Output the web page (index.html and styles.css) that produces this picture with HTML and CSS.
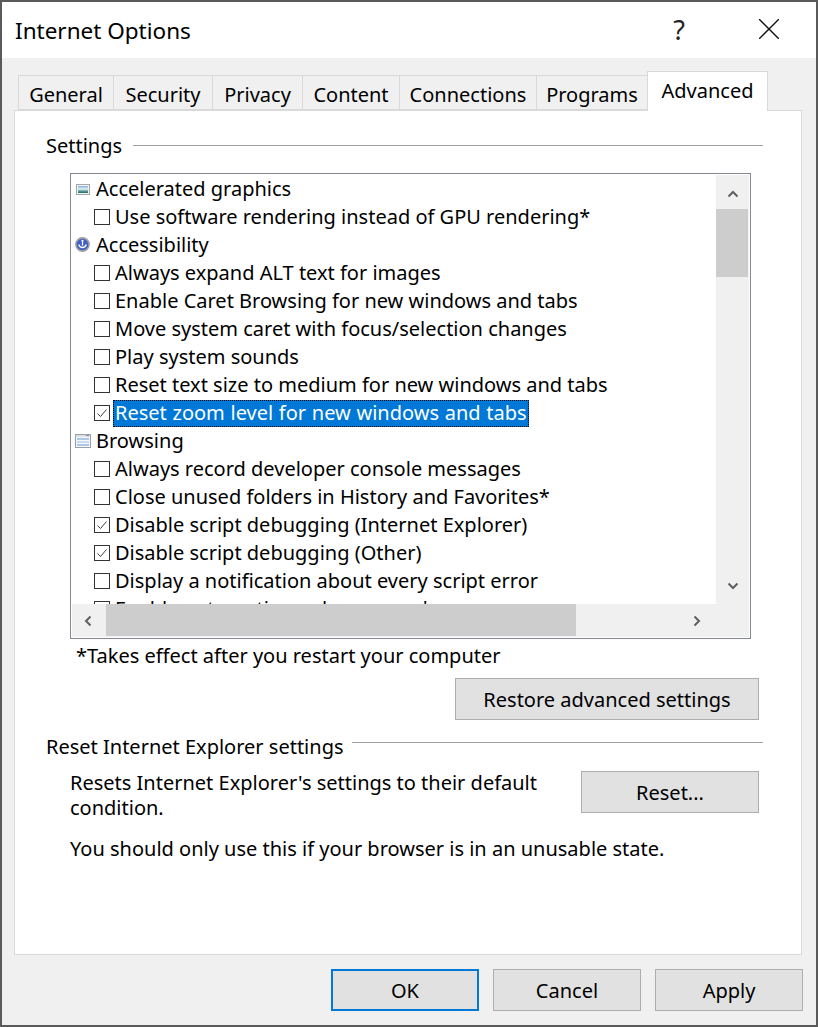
FILE: index.html
```html
<!DOCTYPE html>
<html lang="en">
<head>
<meta charset="utf-8">
<title>Internet Options</title>
<link rel="stylesheet" href="styles.css">
</head>
<body>
<svg class="defs" width="0" height="0" aria-hidden="true">
  <symbol id="check" viewBox="0 0 14 14">
    <path d="M2.500 7.500 5.500 10.500 11.500 3.500" fill="none" stroke="#3c3c3c" stroke-width="1"/>
  </symbol>
</svg>
<div class="window">
  <header class="titlebar">
    <span class="title">Internet Options</span>
    <span class="help">?</span>
    <svg class="close" width="20" height="20" viewBox="0 0 20 20"><path d="M0 0 20 20M20 0 0 20" stroke="#111" stroke-width="1.4"/></svg>
  </header>
  <main class="content">
    <nav class="tabs">
      <span class="tab">General</span>
      <span class="tab">Security</span>
      <span class="tab">Privacy</span>
      <span class="tab">Content</span>
      <span class="tab">Connections</span>
      <span class="tab">Programs</span>
      <span class="tab tab-active">Advanced</span>
    </nav>
    <section class="panel">
      <div class="group-head group-settings"><span>Settings</span><i class="rule"></i></div>
      <div class="listbox">
        <div class="list-view">
          <ul class="rows">
            <li class="row head">
              <svg class="ico" width="16" height="16" viewBox="0 0 16 16">
                <defs><linearGradient id="sky" x1="0" y1="0" x2="0" y2="1"><stop offset="0" stop-color="#7fb4d8"/><stop offset=".45" stop-color="#e4f1f6"/><stop offset=".7" stop-color="#5f9fa0"/><stop offset="1" stop-color="#1f6f68"/></linearGradient></defs>
                <rect x="1.500" y="3.500" width="13" height="10" fill="#f2f2f2" stroke="#a4a8ae"/>
                <rect x="3" y="5" width="10" height="7" fill="url(#sky)"/>
              </svg>
              Accelerated graphics</li>
            <li class="row"><i class="box"></i>Use software rendering instead of GPU rendering*</li>
            <li class="row head">
              <svg class="ico" width="16" height="16" viewBox="0 0 16 16">
                <circle cx="7.500" cy="7.500" r="6.600" fill="#3f5fc8" stroke="#a0a0a0" stroke-width="1.600"/>
                <circle cx="7.500" cy="3.800" r="1.100" fill="#fff"/>
                <path d="M7.500 4.500V8.500M3.800 7.500C4.800 11.500 10.200 11.500 11.200 7.500" fill="none" stroke="#fff" stroke-width="1.300"/>
              </svg>
              Accessibility</li>
            <li class="row"><i class="box"></i>Always expand ALT text for images</li>
            <li class="row"><i class="box"></i>Enable Caret Browsing for new windows and tabs</li>
            <li class="row"><i class="box"></i>Move system caret with focus/selection changes</li>
            <li class="row"><i class="box"></i>Play system sounds</li>
            <li class="row"><i class="box"></i>Reset text size to medium for new windows and tabs</li>
            <li class="row"><i class="box"><svg width="14" height="14"><use href="#check"/></svg></i><span class="selected">Reset zoom level for new windows and tabs</span></li>
            <li class="row head">
              <svg class="ico" width="16" height="16" viewBox="0 0 16 16">
                <rect x=".500" y="1.500" width="15" height="13" fill="#f6f6f6" stroke="#9aa0a8"/>
                <rect x="1" y="2" width="14" height="2" fill="#dcdfe4"/>
                <rect x="11" y="2" width="3" height="1" fill="#8a8f96"/>
                <rect x="2" y="5" width="12" height="2" fill="#a9c8ea"/>
                <rect x="2" y="8" width="12" height="2" fill="#c6dbf1"/>
                <rect x="2" y="11" width="12" height="2" fill="#a9c8ea"/>
              </svg>
              Browsing</li>
            <li class="row"><i class="box"></i>Always record developer console messages</li>
            <li class="row"><i class="box"></i>Close unused folders in History and Favorites*</li>
            <li class="row"><i class="box"><svg width="14" height="14"><use href="#check"/></svg></i>Disable script debugging (Internet Explorer)</li>
            <li class="row"><i class="box"><svg width="14" height="14"><use href="#check"/></svg></i>Disable script debugging (Other)</li>
            <li class="row"><i class="box"></i>Display a notification about every script error</li>
            <li class="row"><i class="box"></i>Enable automatic crash recovery*</li>
          </ul>
        </div>
        <div class="vscroll">
          <svg class="arrow" width="12" height="8" viewBox="0 0 12 8"><path d="M1.500 6.500 6 2l4.500 4.500" fill="none" stroke="#606060" stroke-width="2"/></svg>
          <i class="vthumb"></i>
          <svg class="arrow arrow-end" width="12" height="8" viewBox="0 0 12 8"><path d="M1.500 1.500 6 6l4.500-4.500" fill="none" stroke="#606060" stroke-width="2"/></svg>
        </div>
        <div class="hscroll">
          <svg class="arrow-h" width="8" height="12" viewBox="0 0 8 12"><path d="M6.500 1.500 2 6l4.500 4.500" fill="none" stroke="#606060" stroke-width="2"/></svg>
          <i class="hthumb"></i>
          <svg class="arrow-h arrow-right" width="8" height="12" viewBox="0 0 8 12"><path d="M1.500 1.500 6 6l-4.500 4.500" fill="none" stroke="#606060" stroke-width="2"/></svg>
        </div>
        <div class="corner"></div>
      </div>
      <p class="note">*Takes effect after you restart your computer</p>
      <div class="restore-line"><button class="btn btn-restore">Restore advanced settings</button></div>
      <div class="group-head group-reset"><span>Reset Internet Explorer settings</span><i class="rule"></i></div>
      <div class="reset-area">
        <p class="reset-text">Resets Internet Explorer's settings to their default condition.</p>
        <button class="btn btn-reset">Reset...</button>
      </div>
      <p class="warn">You should only use this if your browser is in an unusable state.</p>
    </section>
    <footer class="actions">
      <button class="btn btn-action btn-default">OK</button>
      <button class="btn btn-action">Cancel</button>
      <button class="btn btn-action">Apply</button>
    </footer>
  </main>
</div>
</body>
</html>
```
FILE: styles.css
```css
* { box-sizing: border-box; }
html, body { margin: 0; padding: 0; }
body {
  width: 818px;
  height: 1027px;
  overflow: hidden;
  font-family: "Noto Sans", "Open Sans", sans-serif;
  font-size: 20px;
  color: #000;
}
.defs { position: absolute; }
.window {
  width: 818px;
  height: 1027px;
  border: 2px solid #5a5a5a;
  display: flex;
  flex-direction: column;
  background: #f0f0f0;
}
.titlebar {
  height: 56px;
  background: #fff;
  display: flex;
  align-items: center;
  padding: 0 37px 0 13px;
  flex: none;
}
.title { font-size: 22.5px; flex: 1; padding-top: 1px; }
.help { font-size: 27px; margin-right: 74px; color: #222; margin-bottom: 2px; }
.close { display: block; margin-bottom: 2px; }
.content { flex: 1; padding: 13px 14px 0 12px; display: flex; flex-direction: column; }
.tabs {
  display: grid;
  grid-template-columns: 95px 99px 90px 97px 137px 111px 121px;
  margin-left: 4px;
  height: 39px;
  align-items: end;
  position: relative;
  z-index: 1;
  flex: none;
}
.tab {
  height: 35px;
  border: 1px solid #d9d9d9;
  border-right: 0;
  display: flex;
  align-items: center;
  justify-content: center;
  background: #f0f0f0;
  line-height: 1;
  padding-top: 4px;
}
.tab-active {
  height: 40px;
  background: #fff;
  border-right: 1px solid #d9d9d9;
  border-bottom: 0;
  padding-top: 0;
  padding-bottom: 1px;
  margin-bottom: -1px;
}
.panel {
  height: 845px;
  background: #fff;
  border: 1px solid #d9d9d9;
  padding: 0 38px 0 31px;
  flex: none;
}
.group-head { display: flex; align-items: center; line-height: 28px; }
.group-head span { flex: none; }
.rule { flex: 1; height: 1px; background: #a0a0a0; }
.group-settings { margin-top: 21px; }
.group-settings .rule { margin: -2px 0 0 11px; }
.listbox {
  margin: 13px 0 0 24px;
  width: 681px;
  height: 466px;
  border: 1px solid #828790;
  display: grid;
  grid-template-columns: 644px 33px;
  grid-template-rows: 429px 33px;
  padding: 1px;
}
.list-view { overflow: hidden; background: #fff; }
.rows { list-style: none; margin: 0; padding: 0; }
.row {
  height: 28px;
  display: flex;
  align-items: center;
  white-space: nowrap;
  padding: 0 0 2px 22px;
  line-height: 27px;
}
.row.head { padding-left: 3px; }
.ico { flex: none; margin: 2px 5px 0 0; display: block; }
.box {
  flex: none;
  width: 16px;
  height: 16px;
  border: 1px solid #333;
  margin: 2px 5px 0 0;
  background: #fff;
  display: block;
}
.box svg { display: block; margin: 0; }
.selected {
  background: #0078d7;
  color: #fff;
  outline: 1px dotted #000;
  outline-offset: -1px;
  height: 27px;
  padding: 0 2px;
  margin-left: -2px;
  align-self: flex-start;
  margin-top: 1px;
  line-height: 26px;
  word-spacing: .5px;
}
.vscroll {
  background: #f0f0f0;
  display: flex;
  flex-direction: column;
  align-items: center;
  padding-top: 15px;
}
.arrow { display: block; flex: none; }
.arrow-end { margin-top: auto; margin-bottom: 14px; }
.vthumb { width: 32px; height: 68px; background: #cdcdcd; margin-top: 11px; display: block; align-self: flex-start; }
.hscroll {
  background: #f0f0f0;
  display: flex;
  align-items: center;
  padding-left: 12px;
}
.hthumb { height: 32px; width: 470px; background: #cdcdcd; margin-left: 14px; display: block; align-self: flex-start; }
.arrow-h { display: block; flex: none; }
.arrow-right { margin-left: auto; margin-right: 15px; }
.corner { background: #f0f0f0; }
.note { margin: 3px 0 0 30px; line-height: 28px; }
.btn {
  font: inherit;
  color: #000;
  background: #e1e1e1;
  border: 1px solid #adadad;
  height: 42px;
  padding: 0;
  border-radius: 0;
}
.restore-line { display: flex; justify-content: flex-end; margin: 8px 4px 0 0; }
.btn-restore { width: 304px; }
.group-reset { margin-top: 13px; }
.group-reset .rule { margin: -10px 0 0 8px; }
.reset-area { display: flex; margin: 10px 4px 0 24px; align-items: flex-start; justify-content: space-between; }
.reset-text { margin: -1px 0 0; width: 490px; line-height: 25px; }
.btn-reset { width: 178px; flex: none; }
.warn { margin: 15px 0 0 24px; line-height: 28px; }
.actions { display: flex; justify-content: flex-end; gap: 14px; padding: 14px 0 0; margin-right: -1px; }
.btn-action { width: 148px; }
.btn-default { border: 2px solid #0078d7; }
```
